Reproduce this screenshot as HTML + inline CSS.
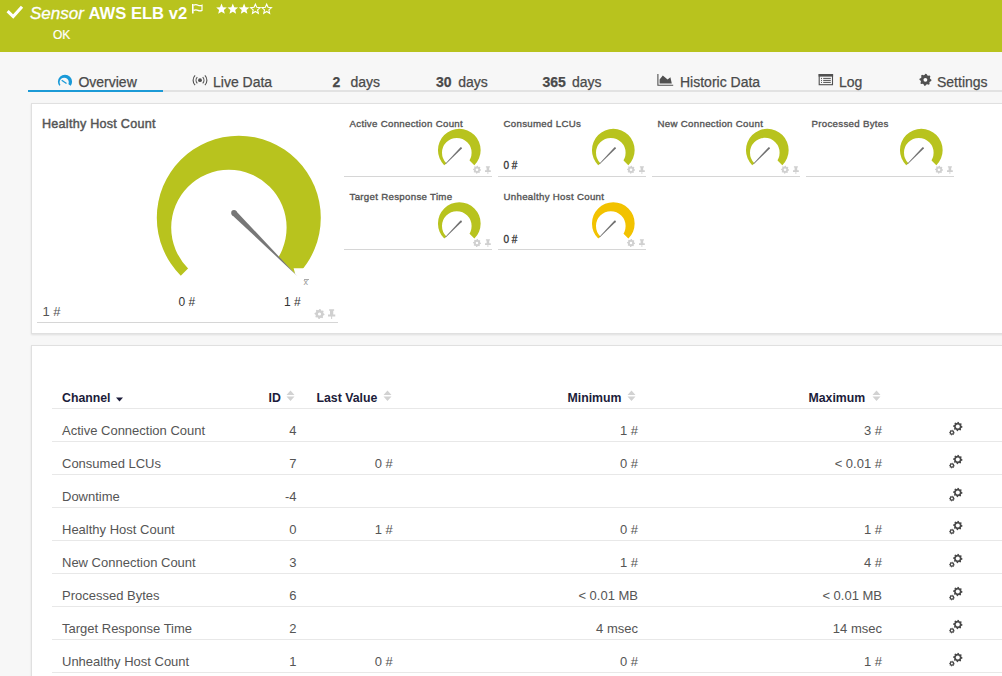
<!DOCTYPE html>
<html><head><meta charset="utf-8">
<style>
*{margin:0;padding:0;box-sizing:border-box}
html,body{width:1002px;height:676px;overflow:hidden}
body{position:relative;background:#f7f7f7;font-family:"Liberation Sans",sans-serif;color:#444}
.a{position:absolute;white-space:nowrap}
#hdr{position:absolute;left:0;top:0;width:1002px;height:52px;background:#b8c31e}
.tab{position:absolute;top:75px;font-size:14px;line-height:14px;color:#4a4a4a;-webkit-text-stroke:0.25px #4a4a4a;white-space:nowrap}
.panel{position:absolute;background:#fff;border:1px solid #e0e0e0;box-shadow:0 1px 2px rgba(0,0,0,.10)}
.tt{position:absolute;font-size:9.7px;line-height:9.7px;letter-spacing:0.3px;font-weight:normal;-webkit-text-stroke:0.35px #555;color:#555;white-space:nowrap}
.tv{position:absolute;font-size:10px;line-height:10px;color:#333;-webkit-text-stroke:0.3px #333;white-space:nowrap}
.tl{position:absolute;height:1px;background:#d6d6d6}
.th{position:absolute;top:392px;font-size:12.3px;line-height:12.3px;font-weight:bold;color:#1c1c3a;white-space:nowrap}
.td{position:absolute;font-size:13px;line-height:13px;color:#555;white-space:nowrap}
.rl{position:absolute;left:52px;width:950px;height:1px;background:#e8e8e8}
</style></head><body>
<div id="hdr"></div>
<svg class="a" style="left:0;top:0" width="30" height="25"><path d="M7.6 11.2 L13.2 16.6 L22 6.8" stroke="#fff" stroke-width="3.1" fill="none"/></svg>
<div class="a" style="left:30px;top:5px;font-size:17px;line-height:17px;color:#fff;font-style:italic;-webkit-text-stroke:0.3px #fff">Sensor</div>
<div class="a" style="left:88.5px;top:5px;font-size:16.6px;line-height:17px;color:#fff;font-weight:bold">AWS ELB v2</div>
<svg class="a" style="left:0;top:0" width="220" height="20"><path d="M192.8 4 V13.5" stroke="#fff" stroke-width="1.6"/><path d="M193.5 5.2 Q196 4.2 198 5.2 Q200 6.2 202 5.2 V10.4 Q200 11.4 198 10.4 Q196 9.4 193.5 10.4" stroke="#fff" stroke-width="1.2" fill="none"/></svg>
<svg class="a" style="left:0;top:0" width="300" height="20"><polygon points="221.50,3.60 222.97,7.18 226.83,7.47 223.88,9.97 224.79,13.73 221.50,11.70 218.21,13.73 219.12,9.97 216.17,7.47 220.03,7.18" fill="#fff"/><polygon points="232.80,3.60 234.27,7.18 238.13,7.47 235.18,9.97 236.09,13.73 232.80,11.70 229.51,13.73 230.42,9.97 227.47,7.47 231.33,7.18" fill="#fff"/><polygon points="244.10,3.60 245.57,7.18 249.43,7.47 246.48,9.97 247.39,13.73 244.10,11.70 240.81,13.73 241.72,9.97 238.77,7.47 242.63,7.18" fill="#fff"/><polygon points="255.40,4.20 256.75,7.34 260.16,7.65 257.59,9.91 258.34,13.25 255.40,11.50 252.46,13.25 253.21,9.91 250.64,7.65 254.05,7.34" fill="none" stroke="#fff" stroke-width="1.1"/><polygon points="266.70,4.20 268.05,7.34 271.46,7.65 268.89,9.91 269.64,13.25 266.70,11.50 263.76,13.25 264.51,9.91 261.94,7.65 265.35,7.34" fill="none" stroke="#fff" stroke-width="1.1"/></svg>
<div class="a" style="left:53px;top:28.8px;font-size:12px;line-height:12px;color:#fff;-webkit-text-stroke:0.2px #fff">OK</div>

<div class="a" style="left:28px;top:90px;width:135px;height:2px;background:#1c9ad6"></div>
<div class="a" style="left:163px;top:90px;width:839px;height:2px;background:#e2e2e2"></div>
<svg class="a" style="left:0;top:0" width="100" height="100"><defs><clipPath id="ovc"><polygon points="65,81.8 45,96 45,60 85,60 85,96"/></clipPath></defs><path d="M57.9,81.8 a7.1,7.1 0 1,0 14.2,0 a7.1,7.1 0 1,0 -14.2,0 Z M59.6,82.3 a4.6,4.6 0 1,0 9.2,0 a4.6,4.6 0 1,0 -9.2,0 Z" fill="#1a9ad8" fill-rule="evenodd" clip-path="url(#ovc)"/><path d="M61.7 80.3 L66.5 83.5" stroke="#1a9ad8" stroke-width="1.3"/></svg>
<div class="tab" style="left:78.4px">Overview</div>
<svg class="a" style="left:0;top:0" width="300" height="100"><circle cx="200" cy="80.2" r="1.9" fill="#505050"/><path d="M197.3 77.1 A4.5 4.5 0 0 0 197.3 83.3 M202.7 77.1 A4.5 4.5 0 0 1 202.7 83.3 M195.1 75.3 A7 7 0 0 0 195.1 85.1 M204.9 75.3 A7 7 0 0 1 204.9 85.1" stroke="#505050" stroke-width="1.1" fill="none"/></svg>
<div class="tab" style="left:213px">Live Data</div>
<div class="tab" style="left:332.5px"><b>2</b></div><div class="tab" style="left:350.5px">days</div>
<div class="tab" style="left:436px"><b>30</b></div><div class="tab" style="left:458.3px">days</div>
<div class="tab" style="left:542.5px"><b>365</b></div><div class="tab" style="left:572px">days</div>
<svg class="a" style="left:0;top:0" width="700" height="100"><path d="M657.9 74 V85.3 H673.2" stroke="#505050" stroke-width="1.1" fill="none"/><path d="M659.6 83.6 V79.6 L662.8 75.6 L667.6 79.4 L670.4 77.2 L671.8 83.6 Z" fill="#505050"/></svg>
<div class="tab" style="left:680px">Historic Data</div>
<svg class="a" style="left:0;top:0" width="900" height="100"><rect x="819.2" y="74.6" width="13.3" height="10.1" fill="none" stroke="#505050" stroke-width="1.1"/><rect x="818.6" y="74" width="14.5" height="2.6" fill="#505050"/><path d="M821 78.4H822M823.2 78.4H830.8M821 80.4H822M823.2 80.4H830.8M821 82.4H822M823.2 82.4H830.8" stroke="#505050" stroke-width="1"/></svg>
<div class="tab" style="left:839px">Log</div>
<svg class="a" style="left:0;top:0" width="1002" height="676"><polygon points="931.40,79.80 931.28,80.97 929.83,81.64 929.39,82.47 929.64,84.04 928.73,84.79 927.24,84.23 926.34,84.51 925.40,85.80 924.23,85.68 923.56,84.23 922.73,83.79 921.16,84.04 920.41,83.13 920.97,81.64 920.69,80.74 919.40,79.80 919.52,78.63 920.97,77.96 921.41,77.13 921.16,75.56 922.07,74.81 923.56,75.37 924.46,75.09 925.40,73.80 926.57,73.92 927.24,75.37 928.07,75.81 929.64,75.56 930.39,76.47 929.83,77.96 930.11,78.86" fill="#505050"/><circle cx="925.4" cy="79.8" r="1.92" fill="#fff"/></svg>
<div class="tab" style="left:937px">Settings</div>

<div class="panel" style="left:31px;top:102.5px;width:1000px;height:231.5px"></div>
<div class="a" style="left:42px;top:118px;font-size:12.6px;line-height:12.6px;font-weight:normal;-webkit-text-stroke:0.45px #555;letter-spacing:0.25px;color:#555">Healthy Host Count</div>
<svg class="a" style="left:0;top:0" width="1002" height="676"><defs><clipPath id="bigc"><polygon points="238.8,217.7 118.80000000000001,337.7 118.80000000000001,97.69999999999999 358.8,97.69999999999999 358.8,268.3 293.6,268.3 295.2,273.8"/></clipPath></defs><path d="M156.8,217.7 a82.0,82.0 0 1,0 164.0,0 a82.0,82.0 0 1,0 -164.0,0 Z M171.2,227.6 a57.7,57.7 0 1,0 115.4,0 a57.7,57.7 0 1,0 -115.4,0 Z" fill="#b8c31e" fill-rule="evenodd" clip-path="url(#bigc)"/><polygon points="232.02,214.88 297.4,276.2 235.98,210.92" fill="#777"/><circle cx="234.0" cy="212.9" r="2.8" fill="#777"/></svg>
<div class="a" style="left:303.5px;top:278px;font-size:9px;line-height:9px;color:#999">x</div><div class="a" style="left:303.8px;top:278.5px;width:5px;height:1px;background:#aaa"></div>
<div class="a" style="left:178.5px;top:296.3px;font-size:12px;line-height:12px;color:#333">0 #</div>
<div class="a" style="left:284px;top:296.3px;font-size:12px;line-height:12px;color:#333">1 #</div>
<div class="a" style="left:42.5px;top:305px;font-size:13px;line-height:13px;color:#555">1 #</div>
<svg class="a" style="left:0;top:0" width="1002" height="676"><polygon points="324.50,314.00 324.40,314.98 323.20,315.53 322.83,316.22 323.04,317.54 322.28,318.16 321.03,317.70 320.28,317.92 319.50,319.00 318.52,318.90 317.97,317.70 317.28,317.33 315.96,317.54 315.34,316.78 315.80,315.53 315.58,314.78 314.50,314.00 314.60,313.02 315.80,312.47 316.17,311.78 315.96,310.46 316.72,309.84 317.97,310.30 318.72,310.08 319.50,309.00 320.48,309.10 321.03,310.30 321.72,310.67 323.04,310.46 323.66,311.22 323.20,312.47 323.42,313.22" fill="#d0d0d0"/><circle cx="319.5" cy="314.0" r="1.6" fill="#fff"/></svg>
<div class="a" style="left:328.3px;top:309px;width:8px;height:10px;transform:scale(1.25);transform-origin:0 0"><svg class="a" style="left:0px;top:0px" width="8" height="9" viewBox="0 0 8 9"><path d="M0.9 0.2 H4.9 V1.4 H4.2 V4.3 H5.8 V6 H3.3 V8 H2.5 V6 H0 V4.3 H1.6 V1.4 H0.9 Z" fill="#d0d0d0"/></svg></div>
<div class="tl" style="left:37px;top:322px;width:301px"></div>
<div class="tt" style="left:349.5px;top:118.89999999999999px">Active Connection Count</div>
<svg class="a" style="left:0;top:0" width="1002" height="676"><defs><clipPath id="c344_176"><polygon points="459.3,150.2 419.3,190.2 419.3,110.19999999999999 499.3,110.19999999999999 499.3,190.2"/></clipPath></defs><path d="M437.95,150.2 a21.35,21.35 0 1,0 42.7,0 a21.35,21.35 0 1,0 -42.7,0 Z M442.0,152.7 a14.8,14.8 0 1,0 29.6,0 a14.8,14.8 0 1,0 -29.6,0 Z" fill="#b8c31e" fill-rule="evenodd" clip-path="url(#c344_176)"/><polygon points="460.27,147.48 445.24,163.74 445.66,164.16 461.63,148.82" fill="#707070"/><circle cx="460.95" cy="148.14999999999998" r="0.95" fill="#707070"/></svg>
<svg class="a" style="left:0;top:0" width="1002" height="676"><polygon points="481.00,169.70 480.92,170.48 479.96,170.92 479.66,171.48 479.83,172.53 479.22,173.03 478.22,172.66 477.62,172.84 477.00,173.70 476.22,173.62 475.78,172.66 475.22,172.36 474.17,172.53 473.67,171.92 474.04,170.92 473.86,170.32 473.00,169.70 473.08,168.92 474.04,168.48 474.34,167.92 474.17,166.87 474.78,166.37 475.78,166.74 476.38,166.56 477.00,165.70 477.78,165.78 478.22,166.74 478.78,167.04 479.83,166.87 480.33,167.48 479.96,168.48 480.14,169.08" fill="#d0d0d0"/><circle cx="477.0" cy="169.7" r="1.28" fill="#fff"/></svg>
<svg class="a" style="left:484.5px;top:165.7px" width="8" height="9" viewBox="0 0 8 9"><path d="M0.9 0.2 H4.9 V1.4 H4.2 V4.3 H5.8 V6 H3.3 V8 H2.5 V6 H0 V4.3 H1.6 V1.4 H0.9 Z" fill="#d0d0d0"/></svg>
<div class="tl" style="left:344px;top:176px;width:148px"></div>
<div class="tt" style="left:503.5px;top:118.89999999999999px">Consumed LCUs</div>
<svg class="a" style="left:0;top:0" width="1002" height="676"><defs><clipPath id="c498_176"><polygon points="613.3,150.2 573.3,190.2 573.3,110.19999999999999 653.3,110.19999999999999 653.3,190.2"/></clipPath></defs><path d="M591.9499999999999,150.2 a21.35,21.35 0 1,0 42.7,0 a21.35,21.35 0 1,0 -42.7,0 Z M596.0,152.7 a14.8,14.8 0 1,0 29.6,0 a14.8,14.8 0 1,0 -29.6,0 Z" fill="#b8c31e" fill-rule="evenodd" clip-path="url(#c498_176)"/><polygon points="614.27,147.48 599.24,163.74 599.66,164.16 615.63,148.82" fill="#707070"/><circle cx="614.9499999999999" cy="148.14999999999998" r="0.95" fill="#707070"/></svg>
<div class="tv" style="left:503.5px;top:161.39999999999998px">0 #</div>
<svg class="a" style="left:0;top:0" width="1002" height="676"><polygon points="635.00,169.70 634.92,170.48 633.96,170.92 633.66,171.48 633.83,172.53 633.22,173.03 632.22,172.66 631.62,172.84 631.00,173.70 630.22,173.62 629.78,172.66 629.22,172.36 628.17,172.53 627.67,171.92 628.04,170.92 627.86,170.32 627.00,169.70 627.08,168.92 628.04,168.48 628.34,167.92 628.17,166.87 628.78,166.37 629.78,166.74 630.38,166.56 631.00,165.70 631.78,165.78 632.22,166.74 632.78,167.04 633.83,166.87 634.33,167.48 633.96,168.48 634.14,169.08" fill="#d0d0d0"/><circle cx="631.0" cy="169.7" r="1.28" fill="#fff"/></svg>
<svg class="a" style="left:638.5px;top:165.7px" width="8" height="9" viewBox="0 0 8 9"><path d="M0.9 0.2 H4.9 V1.4 H4.2 V4.3 H5.8 V6 H3.3 V8 H2.5 V6 H0 V4.3 H1.6 V1.4 H0.9 Z" fill="#d0d0d0"/></svg>
<div class="tl" style="left:498px;top:176px;width:148px"></div>
<div class="tt" style="left:657.5px;top:118.89999999999999px">New Connection Count</div>
<svg class="a" style="left:0;top:0" width="1002" height="676"><defs><clipPath id="c652_176"><polygon points="767.3,150.2 727.3,190.2 727.3,110.19999999999999 807.3,110.19999999999999 807.3,190.2"/></clipPath></defs><path d="M745.9499999999999,150.2 a21.35,21.35 0 1,0 42.7,0 a21.35,21.35 0 1,0 -42.7,0 Z M750.0,152.7 a14.8,14.8 0 1,0 29.6,0 a14.8,14.8 0 1,0 -29.6,0 Z" fill="#b8c31e" fill-rule="evenodd" clip-path="url(#c652_176)"/><polygon points="768.27,147.48 753.24,163.74 753.66,164.16 769.63,148.82" fill="#707070"/><circle cx="768.9499999999999" cy="148.14999999999998" r="0.95" fill="#707070"/></svg>
<svg class="a" style="left:0;top:0" width="1002" height="676"><polygon points="789.00,169.70 788.92,170.48 787.96,170.92 787.66,171.48 787.83,172.53 787.22,173.03 786.22,172.66 785.62,172.84 785.00,173.70 784.22,173.62 783.78,172.66 783.22,172.36 782.17,172.53 781.67,171.92 782.04,170.92 781.86,170.32 781.00,169.70 781.08,168.92 782.04,168.48 782.34,167.92 782.17,166.87 782.78,166.37 783.78,166.74 784.38,166.56 785.00,165.70 785.78,165.78 786.22,166.74 786.78,167.04 787.83,166.87 788.33,167.48 787.96,168.48 788.14,169.08" fill="#d0d0d0"/><circle cx="785.0" cy="169.7" r="1.28" fill="#fff"/></svg>
<svg class="a" style="left:792.5px;top:165.7px" width="8" height="9" viewBox="0 0 8 9"><path d="M0.9 0.2 H4.9 V1.4 H4.2 V4.3 H5.8 V6 H3.3 V8 H2.5 V6 H0 V4.3 H1.6 V1.4 H0.9 Z" fill="#d0d0d0"/></svg>
<div class="tl" style="left:652px;top:176px;width:148px"></div>
<div class="tt" style="left:811.5px;top:118.89999999999999px">Processed Bytes</div>
<svg class="a" style="left:0;top:0" width="1002" height="676"><defs><clipPath id="c806_176"><polygon points="921.3,150.2 881.3,190.2 881.3,110.19999999999999 961.3,110.19999999999999 961.3,190.2"/></clipPath></defs><path d="M899.9499999999999,150.2 a21.35,21.35 0 1,0 42.7,0 a21.35,21.35 0 1,0 -42.7,0 Z M904.0,152.7 a14.8,14.8 0 1,0 29.6,0 a14.8,14.8 0 1,0 -29.6,0 Z" fill="#b8c31e" fill-rule="evenodd" clip-path="url(#c806_176)"/><polygon points="922.27,147.48 907.24,163.74 907.66,164.16 923.63,148.82" fill="#707070"/><circle cx="922.9499999999999" cy="148.14999999999998" r="0.95" fill="#707070"/></svg>
<svg class="a" style="left:0;top:0" width="1002" height="676"><polygon points="943.00,169.70 942.92,170.48 941.96,170.92 941.66,171.48 941.83,172.53 941.22,173.03 940.22,172.66 939.62,172.84 939.00,173.70 938.22,173.62 937.78,172.66 937.22,172.36 936.17,172.53 935.67,171.92 936.04,170.92 935.86,170.32 935.00,169.70 935.08,168.92 936.04,168.48 936.34,167.92 936.17,166.87 936.78,166.37 937.78,166.74 938.38,166.56 939.00,165.70 939.78,165.78 940.22,166.74 940.78,167.04 941.83,166.87 942.33,167.48 941.96,168.48 942.14,169.08" fill="#d0d0d0"/><circle cx="939.0" cy="169.7" r="1.28" fill="#fff"/></svg>
<svg class="a" style="left:946.5px;top:165.7px" width="8" height="9" viewBox="0 0 8 9"><path d="M0.9 0.2 H4.9 V1.4 H4.2 V4.3 H5.8 V6 H3.3 V8 H2.5 V6 H0 V4.3 H1.6 V1.4 H0.9 Z" fill="#d0d0d0"/></svg>
<div class="tl" style="left:806px;top:176px;width:148px"></div>
<div class="tt" style="left:349.5px;top:192.2px">Target Response Time</div>
<svg class="a" style="left:0;top:0" width="1002" height="676"><defs><clipPath id="c344_249"><polygon points="459.3,223.5 419.3,263.5 419.3,183.5 499.3,183.5 499.3,263.5"/></clipPath></defs><path d="M437.95,223.5 a21.35,21.35 0 1,0 42.7,0 a21.35,21.35 0 1,0 -42.7,0 Z M442.0,226.0 a14.8,14.8 0 1,0 29.6,0 a14.8,14.8 0 1,0 -29.6,0 Z" fill="#b8c31e" fill-rule="evenodd" clip-path="url(#c344_249)"/><polygon points="460.27,220.78 445.24,237.04 445.66,237.46 461.63,222.12" fill="#707070"/><circle cx="460.95" cy="221.45" r="0.95" fill="#707070"/></svg>
<svg class="a" style="left:0;top:0" width="1002" height="676"><polygon points="481.00,243.00 480.92,243.78 479.96,244.22 479.66,244.78 479.83,245.83 479.22,246.33 478.22,245.96 477.62,246.14 477.00,247.00 476.22,246.92 475.78,245.96 475.22,245.66 474.17,245.83 473.67,245.22 474.04,244.22 473.86,243.62 473.00,243.00 473.08,242.22 474.04,241.78 474.34,241.22 474.17,240.17 474.78,239.67 475.78,240.04 476.38,239.86 477.00,239.00 477.78,239.08 478.22,240.04 478.78,240.34 479.83,240.17 480.33,240.78 479.96,241.78 480.14,242.38" fill="#d0d0d0"/><circle cx="477.0" cy="243.0" r="1.28" fill="#fff"/></svg>
<svg class="a" style="left:484.5px;top:239.0px" width="8" height="9" viewBox="0 0 8 9"><path d="M0.9 0.2 H4.9 V1.4 H4.2 V4.3 H5.8 V6 H3.3 V8 H2.5 V6 H0 V4.3 H1.6 V1.4 H0.9 Z" fill="#d0d0d0"/></svg>
<div class="tl" style="left:344px;top:249px;width:148px"></div>
<div class="tt" style="left:503.5px;top:192.2px">Unhealthy Host Count</div>
<svg class="a" style="left:0;top:0" width="1002" height="676"><defs><clipPath id="c498_249"><polygon points="613.3,223.5 573.3,263.5 573.3,183.5 653.3,183.5 653.3,263.5"/></clipPath></defs><path d="M591.9499999999999,223.5 a21.35,21.35 0 1,0 42.7,0 a21.35,21.35 0 1,0 -42.7,0 Z M596.0,226.0 a14.8,14.8 0 1,0 29.6,0 a14.8,14.8 0 1,0 -29.6,0 Z" fill="#f2c200" fill-rule="evenodd" clip-path="url(#c498_249)"/><polygon points="614.27,220.78 599.24,237.04 599.66,237.46 615.63,222.12" fill="#707070"/><circle cx="614.9499999999999" cy="221.45" r="0.95" fill="#707070"/></svg>
<div class="tv" style="left:503.5px;top:234.7px">0 #</div>
<svg class="a" style="left:0;top:0" width="1002" height="676"><polygon points="635.00,243.00 634.92,243.78 633.96,244.22 633.66,244.78 633.83,245.83 633.22,246.33 632.22,245.96 631.62,246.14 631.00,247.00 630.22,246.92 629.78,245.96 629.22,245.66 628.17,245.83 627.67,245.22 628.04,244.22 627.86,243.62 627.00,243.00 627.08,242.22 628.04,241.78 628.34,241.22 628.17,240.17 628.78,239.67 629.78,240.04 630.38,239.86 631.00,239.00 631.78,239.08 632.22,240.04 632.78,240.34 633.83,240.17 634.33,240.78 633.96,241.78 634.14,242.38" fill="#d0d0d0"/><circle cx="631.0" cy="243.0" r="1.28" fill="#fff"/></svg>
<svg class="a" style="left:638.5px;top:239.0px" width="8" height="9" viewBox="0 0 8 9"><path d="M0.9 0.2 H4.9 V1.4 H4.2 V4.3 H5.8 V6 H3.3 V8 H2.5 V6 H0 V4.3 H1.6 V1.4 H0.9 Z" fill="#d0d0d0"/></svg>
<div class="tl" style="left:498px;top:249px;width:148px"></div>

<div class="panel" style="left:31px;top:344.5px;width:1000px;height:400px"></div>
<div class="th" style="left:62px">Channel</div><svg class="a" style="left:116px;top:397px" width="7" height="5" viewBox="0 0 7 5"><path d="M0 0.5H7L3.5 4.5Z" fill="#1c1c3a"/></svg><div class="th" style="left:268.5px">ID</div><svg class="a" style="left:285.5px;top:390px" width="9" height="12" viewBox="0 0 9 12"><path d="M4.5 0.5 L8.5 5 H0.5 Z M0.5 6.5 H8.5 L4.5 11 Z" fill="#d2d2d2"/></svg><div class="th" style="left:316.5px">Last Value</div><svg class="a" style="left:382.5px;top:390px" width="9" height="12" viewBox="0 0 9 12"><path d="M4.5 0.5 L8.5 5 H0.5 Z M0.5 6.5 H8.5 L4.5 11 Z" fill="#d2d2d2"/></svg><div class="th" style="left:567.5px">Minimum</div><svg class="a" style="left:626.5px;top:390px" width="9" height="12" viewBox="0 0 9 12"><path d="M4.5 0.5 L8.5 5 H0.5 Z M0.5 6.5 H8.5 L4.5 11 Z" fill="#d2d2d2"/></svg><div class="th" style="left:808.5px">Maximum</div><svg class="a" style="left:871.5px;top:390px" width="9" height="12" viewBox="0 0 9 12"><path d="M4.5 0.5 L8.5 5 H0.5 Z M0.5 6.5 H8.5 L4.5 11 Z" fill="#d2d2d2"/></svg><div class="rl" style="top:408px"></div>
<div class="td" style="left:62px;top:423.9px">Active Connection Count</div><div class="td r" style="right:705.5px;top:423.9px">4</div><div class="td r" style="right:364px;top:423.9px">1 #</div><div class="td r" style="right:120px;top:423.9px">3 #</div><svg class="a" style="left:0;top:0" width="1002" height="676"><polygon points="962.50,426.50 962.41,427.42 961.19,427.90 960.85,428.54 961.12,429.82 960.41,430.41 959.20,429.89 958.52,430.10 957.80,431.20 956.88,431.11 956.40,429.89 955.76,429.55 954.48,429.82 953.89,429.11 954.41,427.90 954.20,427.22 953.10,426.50 953.19,425.58 954.41,425.10 954.75,424.46 954.48,423.18 955.19,422.59 956.40,423.11 957.08,422.90 957.80,421.80 958.72,421.89 959.20,423.11 959.84,423.45 961.12,423.18 961.71,423.89 961.19,425.10 961.40,425.78" fill="#484848"/><circle cx="957.8" cy="426.5" r="2.0" fill="#fff"/></svg><svg class="a" style="left:0;top:0" width="1002" height="676"><polygon points="954.70,432.60 954.65,433.15 953.92,433.44 953.72,433.81 953.88,434.58 953.46,434.93 952.74,434.62 952.33,434.74 951.90,435.40 951.35,435.35 951.06,434.62 950.69,434.42 949.92,434.58 949.57,434.16 949.88,433.44 949.76,433.03 949.10,432.60 949.15,432.05 949.88,431.76 950.08,431.39 949.92,430.62 950.34,430.27 951.06,430.58 951.47,430.46 951.90,429.80 952.45,429.85 952.74,430.58 953.11,430.78 953.88,430.62 954.23,431.04 953.92,431.76 954.04,432.17" fill="#484848"/><circle cx="951.9" cy="432.6" r="1.0" fill="#fff"/></svg><div class="rl" style="top:441px"></div>
<div class="td" style="left:62px;top:456.9px">Consumed LCUs</div><div class="td r" style="right:705.5px;top:456.9px">7</div><div class="td r" style="right:609.3px;top:456.9px">0 #</div><div class="td r" style="right:364px;top:456.9px">0 #</div><div class="td r" style="right:120px;top:456.9px">&lt; 0.01 #</div><svg class="a" style="left:0;top:0" width="1002" height="676"><polygon points="962.50,459.50 962.41,460.42 961.19,460.90 960.85,461.54 961.12,462.82 960.41,463.41 959.20,462.89 958.52,463.10 957.80,464.20 956.88,464.11 956.40,462.89 955.76,462.55 954.48,462.82 953.89,462.11 954.41,460.90 954.20,460.22 953.10,459.50 953.19,458.58 954.41,458.10 954.75,457.46 954.48,456.18 955.19,455.59 956.40,456.11 957.08,455.90 957.80,454.80 958.72,454.89 959.20,456.11 959.84,456.45 961.12,456.18 961.71,456.89 961.19,458.10 961.40,458.78" fill="#484848"/><circle cx="957.8" cy="459.5" r="2.0" fill="#fff"/></svg><svg class="a" style="left:0;top:0" width="1002" height="676"><polygon points="954.70,465.60 954.65,466.15 953.92,466.44 953.72,466.81 953.88,467.58 953.46,467.93 952.74,467.62 952.33,467.74 951.90,468.40 951.35,468.35 951.06,467.62 950.69,467.42 949.92,467.58 949.57,467.16 949.88,466.44 949.76,466.03 949.10,465.60 949.15,465.05 949.88,464.76 950.08,464.39 949.92,463.62 950.34,463.27 951.06,463.58 951.47,463.46 951.90,462.80 952.45,462.85 952.74,463.58 953.11,463.78 953.88,463.62 954.23,464.04 953.92,464.76 954.04,465.17" fill="#484848"/><circle cx="951.9" cy="465.6" r="1.0" fill="#fff"/></svg><div class="rl" style="top:474px"></div>
<div class="td" style="left:62px;top:489.9px">Downtime</div><div class="td r" style="right:705.5px;top:489.9px">-4</div><svg class="a" style="left:0;top:0" width="1002" height="676"><polygon points="962.50,492.50 962.41,493.42 961.19,493.90 960.85,494.54 961.12,495.82 960.41,496.41 959.20,495.89 958.52,496.10 957.80,497.20 956.88,497.11 956.40,495.89 955.76,495.55 954.48,495.82 953.89,495.11 954.41,493.90 954.20,493.22 953.10,492.50 953.19,491.58 954.41,491.10 954.75,490.46 954.48,489.18 955.19,488.59 956.40,489.11 957.08,488.90 957.80,487.80 958.72,487.89 959.20,489.11 959.84,489.45 961.12,489.18 961.71,489.89 961.19,491.10 961.40,491.78" fill="#484848"/><circle cx="957.8" cy="492.5" r="2.0" fill="#fff"/></svg><svg class="a" style="left:0;top:0" width="1002" height="676"><polygon points="954.70,498.60 954.65,499.15 953.92,499.44 953.72,499.81 953.88,500.58 953.46,500.93 952.74,500.62 952.33,500.74 951.90,501.40 951.35,501.35 951.06,500.62 950.69,500.42 949.92,500.58 949.57,500.16 949.88,499.44 949.76,499.03 949.10,498.60 949.15,498.05 949.88,497.76 950.08,497.39 949.92,496.62 950.34,496.27 951.06,496.58 951.47,496.46 951.90,495.80 952.45,495.85 952.74,496.58 953.11,496.78 953.88,496.62 954.23,497.04 953.92,497.76 954.04,498.17" fill="#484848"/><circle cx="951.9" cy="498.6" r="1.0" fill="#fff"/></svg><div class="rl" style="top:507px"></div>
<div class="td" style="left:62px;top:522.9px">Healthy Host Count</div><div class="td r" style="right:705.5px;top:522.9px">0</div><div class="td r" style="right:609.3px;top:522.9px">1 #</div><div class="td r" style="right:364px;top:522.9px">0 #</div><div class="td r" style="right:120px;top:522.9px">1 #</div><svg class="a" style="left:0;top:0" width="1002" height="676"><polygon points="962.50,525.50 962.41,526.42 961.19,526.90 960.85,527.54 961.12,528.82 960.41,529.41 959.20,528.89 958.52,529.10 957.80,530.20 956.88,530.11 956.40,528.89 955.76,528.55 954.48,528.82 953.89,528.11 954.41,526.90 954.20,526.22 953.10,525.50 953.19,524.58 954.41,524.10 954.75,523.46 954.48,522.18 955.19,521.59 956.40,522.11 957.08,521.90 957.80,520.80 958.72,520.89 959.20,522.11 959.84,522.45 961.12,522.18 961.71,522.89 961.19,524.10 961.40,524.78" fill="#484848"/><circle cx="957.8" cy="525.5" r="2.0" fill="#fff"/></svg><svg class="a" style="left:0;top:0" width="1002" height="676"><polygon points="954.70,531.60 954.65,532.15 953.92,532.44 953.72,532.81 953.88,533.58 953.46,533.93 952.74,533.62 952.33,533.74 951.90,534.40 951.35,534.35 951.06,533.62 950.69,533.42 949.92,533.58 949.57,533.16 949.88,532.44 949.76,532.03 949.10,531.60 949.15,531.05 949.88,530.76 950.08,530.39 949.92,529.62 950.34,529.27 951.06,529.58 951.47,529.46 951.90,528.80 952.45,528.85 952.74,529.58 953.11,529.78 953.88,529.62 954.23,530.04 953.92,530.76 954.04,531.17" fill="#484848"/><circle cx="951.9" cy="531.6" r="1.0" fill="#fff"/></svg><div class="rl" style="top:540px"></div>
<div class="td" style="left:62px;top:555.9px">New Connection Count</div><div class="td r" style="right:705.5px;top:555.9px">3</div><div class="td r" style="right:364px;top:555.9px">1 #</div><div class="td r" style="right:120px;top:555.9px">4 #</div><svg class="a" style="left:0;top:0" width="1002" height="676"><polygon points="962.50,558.50 962.41,559.42 961.19,559.90 960.85,560.54 961.12,561.82 960.41,562.41 959.20,561.89 958.52,562.10 957.80,563.20 956.88,563.11 956.40,561.89 955.76,561.55 954.48,561.82 953.89,561.11 954.41,559.90 954.20,559.22 953.10,558.50 953.19,557.58 954.41,557.10 954.75,556.46 954.48,555.18 955.19,554.59 956.40,555.11 957.08,554.90 957.80,553.80 958.72,553.89 959.20,555.11 959.84,555.45 961.12,555.18 961.71,555.89 961.19,557.10 961.40,557.78" fill="#484848"/><circle cx="957.8" cy="558.5" r="2.0" fill="#fff"/></svg><svg class="a" style="left:0;top:0" width="1002" height="676"><polygon points="954.70,564.60 954.65,565.15 953.92,565.44 953.72,565.81 953.88,566.58 953.46,566.93 952.74,566.62 952.33,566.74 951.90,567.40 951.35,567.35 951.06,566.62 950.69,566.42 949.92,566.58 949.57,566.16 949.88,565.44 949.76,565.03 949.10,564.60 949.15,564.05 949.88,563.76 950.08,563.39 949.92,562.62 950.34,562.27 951.06,562.58 951.47,562.46 951.90,561.80 952.45,561.85 952.74,562.58 953.11,562.78 953.88,562.62 954.23,563.04 953.92,563.76 954.04,564.17" fill="#484848"/><circle cx="951.9" cy="564.6" r="1.0" fill="#fff"/></svg><div class="rl" style="top:573px"></div>
<div class="td" style="left:62px;top:588.9px">Processed Bytes</div><div class="td r" style="right:705.5px;top:588.9px">6</div><div class="td r" style="right:364px;top:588.9px">&lt; 0.01 MB</div><div class="td r" style="right:120px;top:588.9px">&lt; 0.01 MB</div><svg class="a" style="left:0;top:0" width="1002" height="676"><polygon points="962.50,591.50 962.41,592.42 961.19,592.90 960.85,593.54 961.12,594.82 960.41,595.41 959.20,594.89 958.52,595.10 957.80,596.20 956.88,596.11 956.40,594.89 955.76,594.55 954.48,594.82 953.89,594.11 954.41,592.90 954.20,592.22 953.10,591.50 953.19,590.58 954.41,590.10 954.75,589.46 954.48,588.18 955.19,587.59 956.40,588.11 957.08,587.90 957.80,586.80 958.72,586.89 959.20,588.11 959.84,588.45 961.12,588.18 961.71,588.89 961.19,590.10 961.40,590.78" fill="#484848"/><circle cx="957.8" cy="591.5" r="2.0" fill="#fff"/></svg><svg class="a" style="left:0;top:0" width="1002" height="676"><polygon points="954.70,597.60 954.65,598.15 953.92,598.44 953.72,598.81 953.88,599.58 953.46,599.93 952.74,599.62 952.33,599.74 951.90,600.40 951.35,600.35 951.06,599.62 950.69,599.42 949.92,599.58 949.57,599.16 949.88,598.44 949.76,598.03 949.10,597.60 949.15,597.05 949.88,596.76 950.08,596.39 949.92,595.62 950.34,595.27 951.06,595.58 951.47,595.46 951.90,594.80 952.45,594.85 952.74,595.58 953.11,595.78 953.88,595.62 954.23,596.04 953.92,596.76 954.04,597.17" fill="#484848"/><circle cx="951.9" cy="597.6" r="1.0" fill="#fff"/></svg><div class="rl" style="top:606px"></div>
<div class="td" style="left:62px;top:621.9px">Target Response Time</div><div class="td r" style="right:705.5px;top:621.9px">2</div><div class="td r" style="right:364px;top:621.9px">4 msec</div><div class="td r" style="right:120px;top:621.9px">14 msec</div><svg class="a" style="left:0;top:0" width="1002" height="676"><polygon points="962.50,624.50 962.41,625.42 961.19,625.90 960.85,626.54 961.12,627.82 960.41,628.41 959.20,627.89 958.52,628.10 957.80,629.20 956.88,629.11 956.40,627.89 955.76,627.55 954.48,627.82 953.89,627.11 954.41,625.90 954.20,625.22 953.10,624.50 953.19,623.58 954.41,623.10 954.75,622.46 954.48,621.18 955.19,620.59 956.40,621.11 957.08,620.90 957.80,619.80 958.72,619.89 959.20,621.11 959.84,621.45 961.12,621.18 961.71,621.89 961.19,623.10 961.40,623.78" fill="#484848"/><circle cx="957.8" cy="624.5" r="2.0" fill="#fff"/></svg><svg class="a" style="left:0;top:0" width="1002" height="676"><polygon points="954.70,630.60 954.65,631.15 953.92,631.44 953.72,631.81 953.88,632.58 953.46,632.93 952.74,632.62 952.33,632.74 951.90,633.40 951.35,633.35 951.06,632.62 950.69,632.42 949.92,632.58 949.57,632.16 949.88,631.44 949.76,631.03 949.10,630.60 949.15,630.05 949.88,629.76 950.08,629.39 949.92,628.62 950.34,628.27 951.06,628.58 951.47,628.46 951.90,627.80 952.45,627.85 952.74,628.58 953.11,628.78 953.88,628.62 954.23,629.04 953.92,629.76 954.04,630.17" fill="#484848"/><circle cx="951.9" cy="630.6" r="1.0" fill="#fff"/></svg><div class="rl" style="top:639px"></div>
<div class="td" style="left:62px;top:654.9px">Unhealthy Host Count</div><div class="td r" style="right:705.5px;top:654.9px">1</div><div class="td r" style="right:609.3px;top:654.9px">0 #</div><div class="td r" style="right:364px;top:654.9px">0 #</div><div class="td r" style="right:120px;top:654.9px">1 #</div><svg class="a" style="left:0;top:0" width="1002" height="676"><polygon points="962.50,657.50 962.41,658.42 961.19,658.90 960.85,659.54 961.12,660.82 960.41,661.41 959.20,660.89 958.52,661.10 957.80,662.20 956.88,662.11 956.40,660.89 955.76,660.55 954.48,660.82 953.89,660.11 954.41,658.90 954.20,658.22 953.10,657.50 953.19,656.58 954.41,656.10 954.75,655.46 954.48,654.18 955.19,653.59 956.40,654.11 957.08,653.90 957.80,652.80 958.72,652.89 959.20,654.11 959.84,654.45 961.12,654.18 961.71,654.89 961.19,656.10 961.40,656.78" fill="#484848"/><circle cx="957.8" cy="657.5" r="2.0" fill="#fff"/></svg><svg class="a" style="left:0;top:0" width="1002" height="676"><polygon points="954.70,663.60 954.65,664.15 953.92,664.44 953.72,664.81 953.88,665.58 953.46,665.93 952.74,665.62 952.33,665.74 951.90,666.40 951.35,666.35 951.06,665.62 950.69,665.42 949.92,665.58 949.57,665.16 949.88,664.44 949.76,664.03 949.10,663.60 949.15,663.05 949.88,662.76 950.08,662.39 949.92,661.62 950.34,661.27 951.06,661.58 951.47,661.46 951.90,660.80 952.45,660.85 952.74,661.58 953.11,661.78 953.88,661.62 954.23,662.04 953.92,662.76 954.04,663.17" fill="#484848"/><circle cx="951.9" cy="663.6" r="1.0" fill="#fff"/></svg><div class="rl" style="top:672px"></div>

</body></html>
